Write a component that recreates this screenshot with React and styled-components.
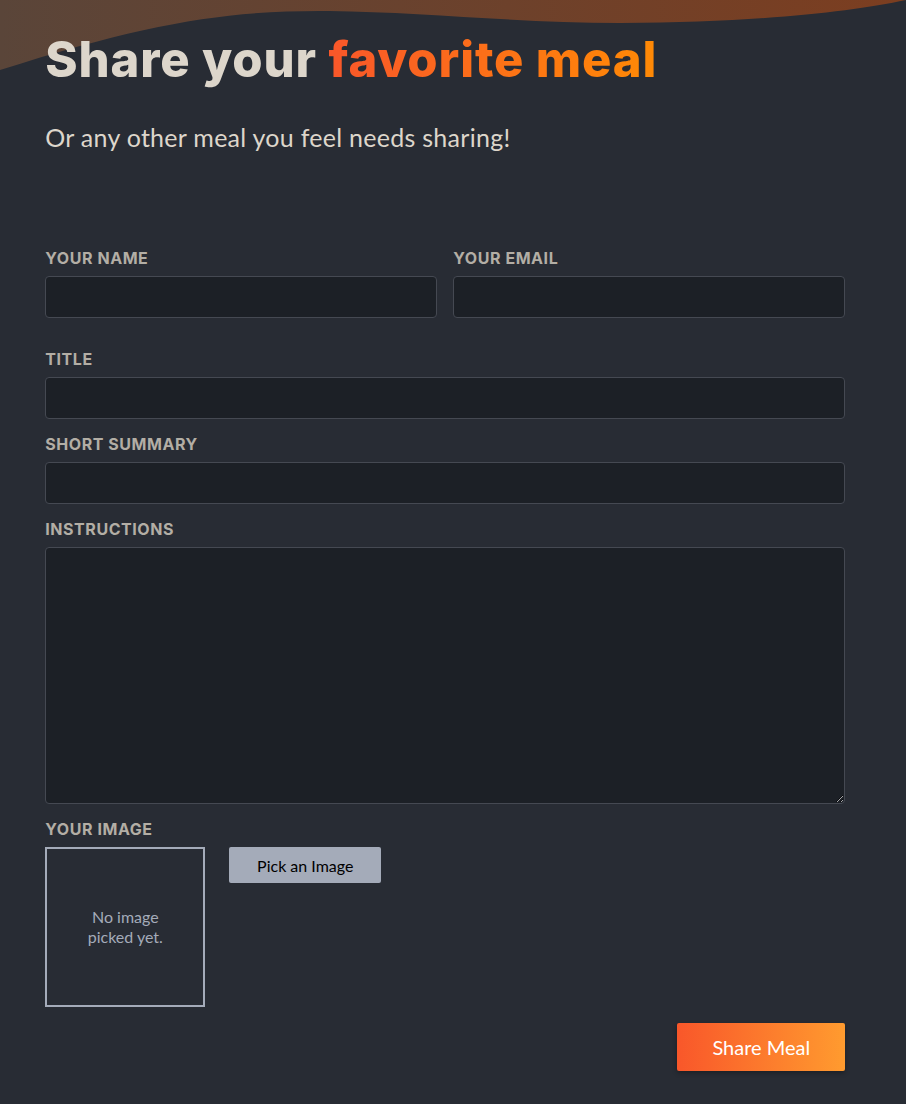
import styled, { createGlobalStyle } from 'styled-components';

const GlobalStyle = createGlobalStyle`
  * { box-sizing: border-box; }
  html, body { margin: 0; background: #282c34; }
  body {
    font-family: Lato, "Open Sans", sans-serif;
    color: #ddd6cb;
  }
`;

const Page = styled.div`
  position: relative;
  min-height: 100vh;
  overflow: hidden;
  padding-bottom: 32px;
`;

const Wave = styled.svg`
  position: absolute;
  top: 0;
  left: 0;
  width: 100%;
  height: 80px;
  display: block;
`;

const Header = styled.header`
  position: relative;
  width: 90%;
  max-width: 75rem;
  margin: 0 auto;
  padding-top: 31px;
`;

const Title = styled.h1`
  margin: 0;
  font-family: Inter, "Open Sans", sans-serif;
  font-weight: 800;
  font-size: 49px;
  line-height: 58px;
  letter-spacing: 0.85px;
  color: #ddd6cb;
`;

const Highlight = styled.span`
  background: linear-gradient(90deg, #f9572a, #ff8a05);
  -webkit-background-clip: text;
  background-clip: text;
  color: transparent;
`;

const Lead = styled.p`
  margin: 30px 0 0;
  font-size: 25px;
  line-height: 36px;
  letter-spacing: 0.27px;
`;

const Main = styled.main`
  position: relative;
  width: 90%;
  max-width: 75rem;
  margin: 93px auto 0;
`;

const Form = styled.form`
  max-width: 800px;
  display: flex;
  flex-direction: column;
  gap: 15px;
`;

const Row = styled.div`
  display: flex;
  gap: 16px;
  margin-bottom: 16px;
`;

const Field = styled.p`
  margin: 0;
  flex: 1;
`;

const Label = styled.label`
  display: block;
  margin-bottom: 8px;
  font-family: Inter, "Open Sans", sans-serif;
  font-weight: 700;
  font-size: 16px;
  line-height: 20px;
  letter-spacing: 0.55px;
  text-transform: uppercase;
  color: #b3aea5;
`;

const Input = styled.input`
  display: block;
  width: 100%;
  height: 42px;
  padding: 8px;
  border: 1px solid #454952;
  border-radius: 4px;
  background: #1c2026;
  color: #ddd6cb;
  font-family: inherit;
  font-size: 20px;
  outline: none;
`;

const TextArea = styled(Input).attrs({ as: 'textarea' })`
  height: 257px;
  resize: vertical;
`;

const Controls = styled.div`
  display: flex;
  align-items: flex-start;
  gap: 24px;
`;

const Preview = styled.div`
  width: 160px;
  height: 160px;
  border: 2px solid #a4abb9;
  display: flex;
  justify-content: center;
  align-items: center;
  text-align: center;
  color: #a4abb9;
`;

const PreviewText = styled.p`
  margin: 0;
  max-width: 90px;
  font-size: 16px;
  line-height: 20px;
`;

const PickButton = styled.button`
  width: 152px;
  height: 36px;
  padding: 0;
  border: 0;
  border-radius: 2px;
  background: #a4abb9;
  color: #000;
  font-family: inherit;
  font-size: 16px;
  cursor: pointer;
`;

const Actions = styled.p`
  margin: 1px 0 0;
  text-align: right;
`;

const ShareButton = styled.button`
  width: 168px;
  height: 48px;
  border: 0;
  border-radius: 2px;
  background: linear-gradient(90deg, #f9572a, #ff9b2f);
  color: #fff;
  font-family: inherit;
  font-size: 20px;
  cursor: pointer;
  box-shadow: 0 2px 5px rgba(0, 0, 0, 0.3);
`;

export default function App() {
  return (
    <Page>
      <GlobalStyle />
      <Wave viewBox="0 0 906 80" preserveAspectRatio="none">
        <defs>
          <linearGradient id="waveGrad" x1="0" x2="1" y1="0" y2="0">
            <stop offset="0" stopColor="#5a4539" />
            <stop offset="1" stopColor="#7c3e20" />
          </linearGradient>
        </defs>
        <path
          d="M0 0 H906 C850 12 760 22 620 23 C520 23 420 12 330 11 C230 10 150 22 0 70 Z"
          fill="url(#waveGrad)"
        />
      </Wave>
      <Header>
        <Title>
          Share your <Highlight>favorite meal</Highlight>
        </Title>
        <Lead>Or any other meal you feel needs sharing!</Lead>
      </Header>
      <Main>
        <Form>
          <Row>
            <Field>
              <Label htmlFor="name">Your name</Label>
              <Input type="text" id="name" />
            </Field>
            <Field>
              <Label htmlFor="email">Your email</Label>
              <Input type="email" id="email" />
            </Field>
          </Row>
          <Field>
            <Label htmlFor="title">Title</Label>
            <Input type="text" id="title" />
          </Field>
          <Field>
            <Label htmlFor="summary">Short Summary</Label>
            <Input type="text" id="summary" />
          </Field>
          <Field>
            <Label htmlFor="instructions">Instructions</Label>
            <TextArea id="instructions" />
          </Field>
          <div>
            <Label htmlFor="image">Your image</Label>
            <Controls>
              <Preview>
                <PreviewText>No image picked yet.</PreviewText>
              </Preview>
              <PickButton type="button">Pick an Image</PickButton>
            </Controls>
          </div>
          <Actions>
            <ShareButton type="button">Share Meal</ShareButton>
          </Actions>
        </Form>
      </Main>
    </Page>
  );
}
